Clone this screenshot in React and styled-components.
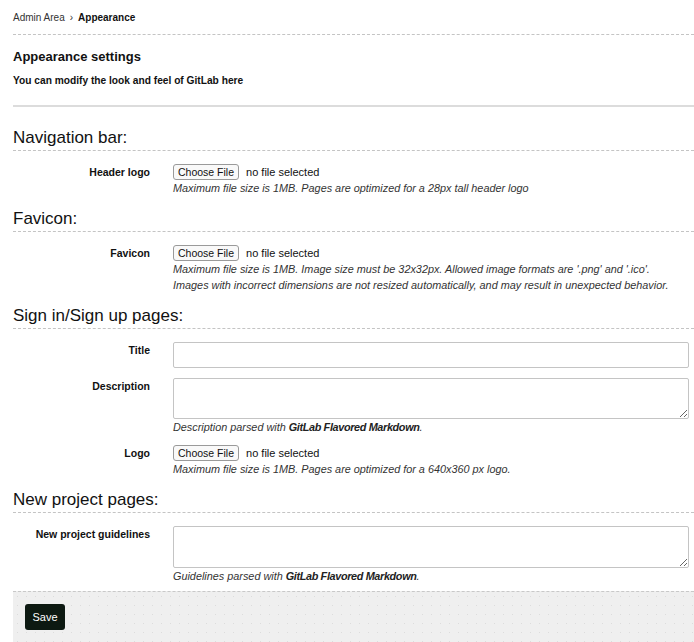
import React from "react";
import styled, { createGlobalStyle } from "styled-components";

const GlobalStyle = createGlobalStyle`
  body {
    margin: 0;
    background: #fff;
    font-family: "Liberation Sans", Arial, sans-serif;
    color: #1f1f1f;
  }
`;

const Page = styled.div`
  padding: 0 5px 0 13px;
`;

const Breadcrumb = styled.div`
  height: 34px;
  display: flex;
  align-items: center;
  gap: 5px;
  font-size: 10px;
  color: #333;
  border-bottom: 1px dashed #c4c4c4;
  margin-right: -5px;

  b {
    color: #111;
  }
`;

const Intro = styled.div`
  padding-top: 14px;
  height: 56px;
  border-bottom: 2px solid #dcdcdc;
  margin-right: -5px;

  h3 {
    margin: 0 0 8px;
    font-size: 13px;
    line-height: 16px;
    color: #111;
  }

  p {
    margin: 0;
    font-size: 10.2px;
    font-weight: 600;
    line-height: 16px;
    color: #111;
  }
`;

const Section = styled.section`
  margin-top: ${(p) => (p.first ? "21px" : "13px")};
`;

const SectionTitle = styled.h4`
  margin: 0 -5px 13px 0;
  font-size: 17px;
  font-weight: 400;
  line-height: 20px;
  padding-bottom: 2px;
  color: #111;
  border-bottom: 1px dashed #c4c4c4;
`;

const Group = styled.div`
  display: grid;
  grid-template-columns: 137px 1fr;
  column-gap: 23px;
  margin-top: 10px;

  &:first-of-type {
    margin-top: 0;
  }
`;

const Label = styled.label`
  text-align: right;
  font-size: 10.5px;
  font-weight: 600;
  line-height: 16px;
  color: #111;
`;

const FileRow = styled.div`
  display: flex;
  align-items: center;
  gap: 7px;
  height: 16px;
  font-size: 11px;
  color: #111;
`;

const FileButton = styled.button`
  height: 16px;
  padding: 0 4px;
  font-family: inherit;
  font-size: 10.5px;
  color: #111;
  background: #f9f9f9;
  border: 1px solid #9a9a9a;
  border-radius: 3px;
  line-height: 14px;
`;

const Help = styled.p`
  margin: 0;
  font-size: 10.85px;
  font-style: italic;
  line-height: 16px;
  color: #333;

  b {
    color: #222;
    letter-spacing: -0.35px;
  }
`;

const TextInput = styled.input`
  box-sizing: border-box;
  width: 100%;
  height: 26px;
  border: 1px solid #c4c4c4;
  border-radius: 2px;
  display: block;
`;

const TextArea = styled.textarea`
  box-sizing: border-box;
  width: 100%;
  height: ${(p) => p.h}px;
  border: 1px solid #c4c4c4;
  border-radius: 2px;
  display: block;
  margin: 0;
`;

const Footer = styled.div`
  margin: 7px -5px 0 0;
  padding: 12px 12px 20px;
  border-top: 1px dashed #c8c8c8;
  background-color: #efefef;
  background-image: radial-gradient(#dcdcdc 0.6px, transparent 0.8px);
  background-size: 9px 9px;
`;

const SaveButton = styled.button`
  width: 40px;
  height: 26px;
  background: #0d1912;
  color: #fff;
  border: none;
  border-radius: 3px;
  font-family: inherit;
  font-size: 11px;
`;

function FileField({ label, children }) {
  return (
    <Group>
      <Label>{label}</Label>
      <div>
        <FileRow>
          <FileButton type="button">Choose File</FileButton>
          <span>no file selected</span>
        </FileRow>
        {children}
      </div>
    </Group>
  );
}

export default function App() {
  return (
    <Page>
      <GlobalStyle />
      <Breadcrumb>
        <span>Admin Area</span>
        <span>›</span>
        <b>Appearance</b>
      </Breadcrumb>
      <Intro>
        <h3>Appearance settings</h3>
        <p>You can modify the look and feel of GitLab here</p>
      </Intro>

      <Section first>
        <SectionTitle>Navigation bar:</SectionTitle>
        <FileField label="Header logo">
          <Help>Maximum file size is 1MB. Pages are optimized for a 28px tall header logo</Help>
        </FileField>
      </Section>

      <Section>
        <SectionTitle>Favicon:</SectionTitle>
        <FileField label="Favicon">
          <Help>
            Maximum file size is 1MB. Image size must be 32x32px. Allowed image formats are '.png' and '.ico'.
            <br />
            Images with incorrect dimensions are not resized automatically, and may result in unexpected behavior.
          </Help>
        </FileField>
      </Section>

      <Section>
        <SectionTitle>Sign in/Sign up pages:</SectionTitle>
        <Group>
          <Label>Title</Label>
          <TextInput type="text" />
        </Group>
        <Group>
          <Label>Description</Label>
          <div>
            <TextArea h={41} />
            <Help>
              Description parsed with <b>GitLab Flavored Markdown</b>.
            </Help>
          </div>
        </Group>
        <FileField label="Logo">
          <Help>Maximum file size is 1MB. Pages are optimized for a 640x360 px logo.</Help>
        </FileField>
      </Section>

      <Section>
        <SectionTitle>New project pages:</SectionTitle>
        <Group>
          <Label>New project guidelines</Label>
          <div>
            <TextArea h={42} />
            <Help>
              Guidelines parsed with <b>GitLab Flavored Markdown</b>.
            </Help>
          </div>
        </Group>
      </Section>

      <Footer>
        <SaveButton type="button">Save</SaveButton>
      </Footer>
    </Page>
  );
}
